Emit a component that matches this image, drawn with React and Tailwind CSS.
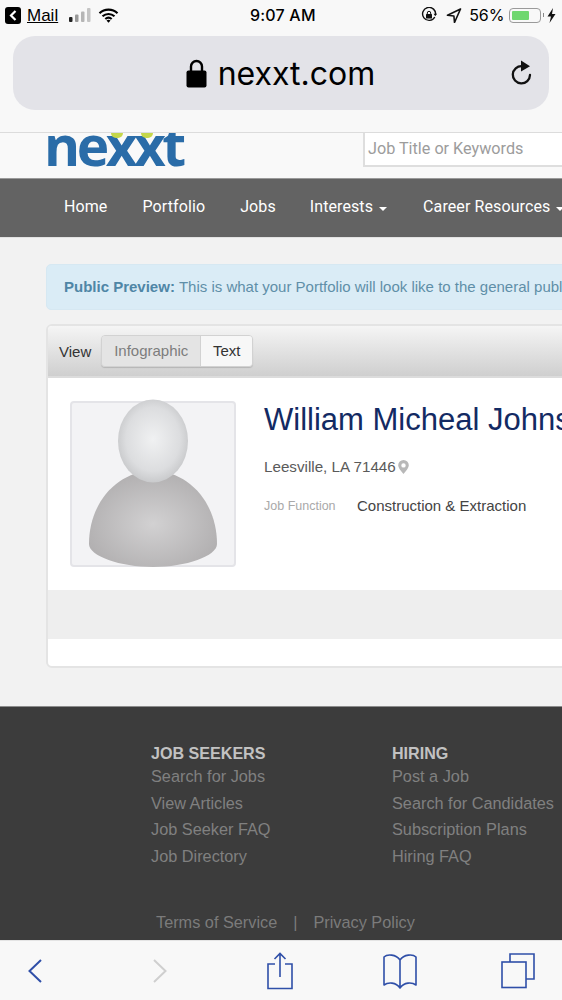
const sans = "font-['Liberation_Sans',Arial,sans-serif]";

function Lock() {
  return (
    <svg width="21" height="29" viewBox="0 0 21 29" className="shrink-0">
      <path d="M5 13V7.5a5.5 5.5 0 0 1 11 0V13" fill="none" stroke="#000" strokeWidth="2.4" />
      <rect x="0.5" y="11.5" width="20" height="17" rx="2" fill="#000" />
    </svg>
  );
}

function Reload() {
  return (
    <svg width="22" height="26" viewBox="0 0 22 26">
      <path d="M12 6.2A8.6 8.6 0 1 0 20 15" fill="none" stroke="#111" strokeWidth="2.3" strokeLinecap="round" />
      <path d="M11 0.5L20 6.2L11 11.5Z" fill="#111" />
    </svg>
  );
}

function StatusBar() {
  return (
    <div className="relative flex h-[30px] items-center text-black">
      <div className="flex items-center pl-[5px]">
        <div className="flex h-[17px] w-[16px] items-center justify-center rounded-[3px] bg-black">
          <svg width="8" height="11" viewBox="0 0 8 11">
            <path d="M6.5 1L2 5.5L6.5 10" fill="none" stroke="#fff" strokeWidth="2.2" />
          </svg>
        </div>
        <span className={`${sans} ml-[6px] text-[17px] leading-none underline`}>Mail</span>
        <svg width="22" height="14" viewBox="0 0 22 14" className="ml-[11px]">
          <rect x="0" y="9" width="3.5" height="5" rx="1" fill="#222" />
          <rect x="6" y="6.5" width="3.5" height="7.5" rx="1" fill="#999" />
          <rect x="12" y="3.5" width="3.5" height="10.5" rx="1" fill="#b5b5b5" />
          <rect x="18" y="0" width="3.5" height="14" rx="1" fill="#c4c4c4" />
        </svg>
        <svg width="21" height="15" viewBox="0 0 20 15" className="ml-[7px]">
          <path d="M1 5.2a13 13 0 0 1 18 0M4 8.3a9 9 0 0 1 12 0M6.8 11a5 5 0 0 1 6.4 0" fill="none" stroke="#000" strokeWidth="2.2" />
          <path d="M8 12.4L10 14.8L12 12.4Q10 11 8 12.4Z" fill="#000" />
        </svg>
      </div>
      <span className="absolute left-[250px] top-[5px] font-['Inter',sans-serif] text-[16px] leading-[20px] font-medium tracking-[0.2px]">9:07 AM</span>
      <div className="ml-auto flex items-center pr-[6px]">
        <svg width="16" height="16" viewBox="0 0 16 16">
          <path d="M13.8 10A6.5 6.5 0 1 1 14.5 8" fill="none" stroke="#111" strokeWidth="1.4" />
          <path d="M12.6 6.8H16L14.3 9.3Z" fill="#111" />
          <rect x="5" y="7" width="6" height="4.5" rx="0.6" fill="#111" />
          <path d="M6.3 7.5V6a1.7 1.7 0 0 1 3.4 0v1.5" fill="none" stroke="#111" strokeWidth="1" />
        </svg>
        <svg width="16" height="15" viewBox="0 0 15 15" className="ml-[9px]">
          <path d="M14 1L1 7.3L7.4 8L8 14.5Z" fill="none" stroke="#111" strokeWidth="1.6" strokeLinejoin="round" />
        </svg>
        <span className="ml-[7px] font-['Inter',sans-serif] text-[16px] leading-none">56%</span>
        <div className="ml-[4px] flex h-[15px] w-[32px] items-center rounded-[4px] border border-[#9a9a9a] p-[2px]">
          <div className="h-full w-[17px] rounded-[1px] bg-[#6fd76f]" />
        </div>
        <div className="ml-[2px] h-[4px] w-[1.5px] bg-[#888]" />
        <svg width="9" height="15" viewBox="0 0 9 15" className="ml-[3px]">
          <path d="M6 0L0.5 8.5H4L2.5 15L8.5 6H5Z" fill="#111" />
        </svg>
      </div>
    </div>
  );
}

function Logo() {
  return (
    <div className="relative ml-[47px] h-[34px] w-[140px] overflow-hidden">
      <span className="absolute left-[-3px] top-[-16px] origin-left scale-x-[1.0] font-['Open_Sans',sans-serif] text-[55px] leading-[55px] font-bold tracking-[-3.5px] text-[#2a6ca8]">nexxt</span>
      <span className="absolute left-[64px] top-0 h-[5px] w-[12px] rounded-b-full bg-[#c5d74a]" />
      <span className="absolute left-[94px] top-0 h-[5px] w-[12px] rounded-b-full bg-[#c5d74a]" />
    </div>
  );
}

function Caret() {
  return <span className="ml-[6px] mt-[4px] inline-block h-0 w-0 border-x-[4.5px] border-t-[4.5px] border-x-transparent border-t-white" />;
}

function Nav() {
  const item = "flex items-center font-['Roboto',sans-serif] text-[16px] leading-none tracking-[0.1px] text-white whitespace-nowrap";
  return (
    <nav className="flex h-[59px] items-center border-t border-[#9a9a9a] bg-[#636363] pb-[2px] pl-[64px]">
      <a className={item}>Home</a>
      <a className={`${item} ml-[35px]`}>Portfolio</a>
      <a className={`${item} ml-[35px]`}>Jobs</a>
      <a className={`${item} ml-[34px]`}>Interests<Caret /></a>
      <a className={`${item} ml-[36px]`}>Career Resources<Caret /></a>
    </nav>
  );
}

function Avatar() {
  return (
    <div className="relative h-[166px] w-[166px] shrink-0 rounded-[4px] border-2 border-[#e4e4e8] bg-[#f3f3f5]">
      <svg width="167" height="176" viewBox="0 0 167 176" className="absolute left-[-2px] top-[-5px]">
        <defs>
          <radialGradient id="av-head" cx="50%" cy="48%" r="55%">
            <stop offset="0%" stopColor="#f0f1f2" />
            <stop offset="70%" stopColor="#dcdddf" />
            <stop offset="100%" stopColor="#c5c6c8" />
          </radialGradient>
          <radialGradient id="av-body" cx="50%" cy="55%" r="58%">
            <stop offset="0%" stopColor="#d2d1d2" />
            <stop offset="100%" stopColor="#b0aeaf" />
          </radialGradient>
        </defs>
        <path d="M19 146C19 105 47 73 83 73C119 73 147 105 147 146C147 158 116 169 83 169C50 169 19 158 19 146Z" fill="url(#av-body)" />
        <ellipse cx="83" cy="43" rx="35" ry="41.5" fill="url(#av-head)" />
      </svg>
    </div>
  );
}

function FooterCol({ title, links, className }) {
  return (
    <div className={className}>
      <div className={`${sans} text-[16.1px] leading-[19px] font-bold text-[#c2c2c2]`}>{title}</div>
      <div className="flex flex-col">
        {links.map((l) => (
          <a key={l} className={`${sans} text-[16.3px] leading-[26.6px] text-[#808080] whitespace-nowrap`}>{l}</a>
        ))}
      </div>
    </div>
  );
}

function BottomBar() {
  const blue = "#2f4fa8";
  return (
    <div className="flex h-[60px] shrink-0 items-center border-t border-[#e4e4e4] bg-[#f8f8f8]">
      <svg width="16" height="26" viewBox="0 0 16 26" className="ml-[27px]">
        <path d="M14 2L2.5 13L14 24" fill="none" stroke={blue} strokeWidth="2" />
      </svg>
      <svg width="16" height="26" viewBox="0 0 16 26" className="ml-[109px]">
        <path d="M2 2L13.5 13L2 24" fill="none" stroke="#cfcfcf" strokeWidth="2" />
      </svg>
      <svg width="28" height="38" viewBox="0 0 28 38" className="ml-[98px]">
        <path d="M9 12H2V36.5H26V12H19" fill="none" stroke={blue} strokeWidth="1.6" />
        <path d="M14 25V2M8.5 7L14 1.5L19.5 7" fill="none" stroke={blue} strokeWidth="1.6" />
      </svg>
      <svg width="36" height="36" viewBox="0 0 36 36" className="ml-[88px]">
        <path d="M18 7C14 1 5 1 2 4V32C6 29 14 29 18 35C22 29 30 29 34 32V4C31 1 22 1 18 7ZM18 7V35" fill="none" stroke={blue} strokeWidth="1.6" strokeLinejoin="round" />
      </svg>
      <svg width="36" height="36" viewBox="0 0 36 36" className="ml-[83px]">
        <rect x="1" y="9" width="24" height="25.5" fill="none" stroke={blue} strokeWidth="1.6" />
        <path d="M9 9V1H33V26H25" fill="none" stroke={blue} strokeWidth="1.6" />
      </svg>
    </div>
  );
}

export default function App() {
  return (
    <div className="flex h-[1000px] w-[562px] flex-col overflow-hidden bg-[#f2f2f2]">
      <div className="h-[133px] shrink-0 border-b border-[#dcdcdc] bg-[#f8f8f8]">
        <StatusBar />
        <div className="mx-[13px] mt-[6px] flex h-[74px] items-center rounded-[22px] bg-[#e3e3e8]">
          <div className="flex flex-1 items-center justify-center pl-[44px] text-black">
            <Lock />
            <span className="ml-[11px] mt-[2px] font-['Inter',sans-serif] text-[32px] leading-none">nexxt.com</span>
          </div>
          <div className="mr-[17px] ml-[6px]"><Reload /></div>
        </div>
      </div>

      <header className="flex h-[45px] shrink-0 items-start bg-[#f9f9f9]">
        <Logo />
        <div className="ml-[176px] flex h-[34px] flex-1 items-center border-b-2 border-l-2 border-[#dedede] bg-white pl-[3px]">
          <span className="font-['Roboto',sans-serif] text-[16.2px] leading-none whitespace-nowrap text-[#9c9c9c]">Job Title or Keywords</span>
        </div>
      </header>

      <Nav />

      <main className="flex h-[469px] shrink-0 flex-col border-t border-[#e2e2e2] pt-[26px] pl-[46px]">
        <div className={`${sans} flex h-[46px] w-[560px] shrink-0 items-center rounded-[5px] border border-[#d6e8f2] bg-[#daecf6] pl-[17px] text-[15px] whitespace-nowrap text-[#5f8fa8]`}>
          <b className="font-bold text-[#4f86a6]">Public Preview:</b>
          <span className="ml-[4px]">This is what your Portfolio will look like to the general public</span>
        </div>

        <div className="mt-[14px] flex h-[344px] w-[560px] shrink-0 flex-col overflow-hidden rounded-[6px] border-2 border-[#e4e4e4] bg-white">
          <div className="flex h-[52px] shrink-0 items-center border-b-2 border-[#dcdcdc] bg-gradient-to-b from-[#f5f5f5] to-[#cfcfcf] pl-[11px]">
            <span className={`${sans} mt-[2px] text-[15px] text-[#333]`}>View</span>
            <div className="ml-[10px] flex h-[32px] overflow-hidden rounded-[4px] border border-[#d2d2d2] shadow-[0_1px_1px_rgba(0,0,0,0.15)]">
              <span className={`${sans} flex w-[98px] items-center justify-center bg-[#e4e4e4] text-[15px] text-[#7d7d7d]`}>Infographic</span>
              <span className={`${sans} flex w-[52px] items-center justify-center border-l border-[#d2d2d2] bg-[#f7f7f7] text-[15px] text-[#333]`}>Text</span>
            </div>
          </div>
          <div className="flex h-[212px] shrink-0 items-start pt-[23px] pl-[22px]">
            <Avatar />
            <div className="ml-[28px] flex flex-col whitespace-nowrap">
              <h1 className={`${sans} mt-[1px] text-[31px] leading-[36px] text-[#132a63]`}>William Micheal Johnson</h1>
              <div className="mt-[20px] flex items-center">
                <span className={`${sans} text-[15.2px] leading-[18px] text-[#5a5a5a]`}>Leesville, LA 71446</span>
                <svg width="11" height="14" viewBox="0 0 11 14" className="ml-[2px]">
                  <path fillRule="evenodd" d="M5.5 0A5.3 5.3 0 0 0 .2 5.3C.2 8.5 5.5 14 5.5 14S10.8 8.5 10.8 5.3A5.3 5.3 0 0 0 5.5 0ZM5.5 3.2a2.2 2.2 0 1 1 0 4.4a2.2 2.2 0 0 1 0-4.4Z" fill="#b8b8b8" />
                </svg>
              </div>
              <div className="mt-[21px] flex items-center">
                <span className={`${sans} w-[93px] text-[12.5px] leading-[18px] text-[#a9a9a9]`}>Job Function</span>
                <span className={`${sans} text-[15px] leading-[18px] text-[#444]`}>Construction &amp; Extraction</span>
              </div>
            </div>
          </div>
          <div className="h-[49px] shrink-0 bg-[#eeeeee]" />
        </div>
      </main>

      <footer className="flex h-[234px] shrink-0 flex-col border-t border-[#8c8c8c] bg-[#3c3c3c]">
        <div className="flex pt-[37px] pl-[151px]">
          <FooterCol
            className="w-[241px]"
            title="JOB SEEKERS"
            links={["Search for Jobs", "View Articles", "Job Seeker FAQ", "Job Directory"]}
          />
          <FooterCol
            title="HIRING"
            links={["Post a Job", "Search for Candidates", "Subscription Plans", "Hiring FAQ"]}
          />
        </div>
        <div className={`${sans} mt-[43px] flex items-center pl-[156px] text-[16.3px] leading-[20px] text-[#7b7b7b]`}>
          <span>Terms of Service</span>
          <span className="ml-[16px]">|</span>
          <span className="ml-[16px]">Privacy Policy</span>
        </div>
      </footer>

      <BottomBar />
    </div>
  );
}
